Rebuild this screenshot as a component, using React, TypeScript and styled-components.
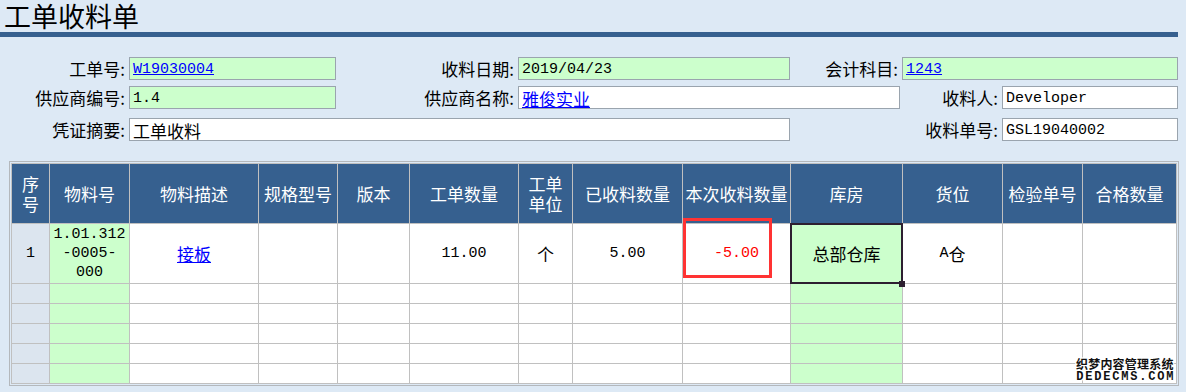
import React from "react";
import styled, { createGlobalStyle } from "styled-components";

const CJK = `"Noto Sans CJK SC", "Noto Sans", sans-serif`;
const MONO = `"Liberation Mono", "Noto Sans CJK SC", monospace`;

const GlobalStyle = createGlobalStyle`
  html, body { margin: 0; padding: 0; background: #dde9f5; }
  body { font-family: ${CJK}; color: #000; }
`;

const Page = styled.div`
  position: relative;
  width: 1186px;
  height: 392px;
  overflow: hidden;
  background: #dde9f5;
`;

const TitleText = styled.h1`
  margin: 0;
  height: 32px;
  padding-left: 4px;
  font: 400 27px/32px ${CJK};
  color: #000;
`;

const TitleBar = styled.div`
  width: 1178px;
  height: 5px;
  background: #36608f;
`;

const Form = styled.div`
  margin-top: 20px;
  display: flex;
  flex-direction: column;
`;

const FormRow = styled.div<{ $cols: string; $mt?: number }>`
  display: grid;
  grid-template-columns: ${(p) => p.$cols};
  height: 23px;
  margin-top: ${(p) => p.$mt ?? 0}px;
  width: 1178px;
`;

const Label = styled.div`
  display: flex;
  align-items: center;
  justify-content: flex-end;
  padding-right: 4px;
  font: 400 17px/23px ${CJK};
  white-space: nowrap;
`;

const Field = styled.div<{ $green?: boolean }>`
  box-sizing: border-box;
  height: 23px;
  border: 1px solid #9aa4ae;
  background: ${(p) => (p.$green ? "#ccffcc" : "#ffffff")};
  padding: 1px 3px 0;
  display: flex;
  align-items: center;
  white-space: nowrap;
  overflow: hidden;
`;

const Mono = styled.span`
  font: 400 15px/21px ${MONO};
`;

const Han = styled.span`
  font: 400 17px/21px ${CJK};
`;

const Link = styled.a`
  color: #0000ff;
  text-decoration: underline;
  cursor: pointer;
`;

const TableWrap = styled.div`
  position: relative;
  margin: 20px 0 0 9px;
  width: fit-content;
  border: 1px solid #b4b8bc;
  padding: 1px;
`;

const Grid = styled.div`
  display: grid;
  grid-template-columns: 37px 79px 128px 78px 71px 108px 53px 109px 107px 111px 99px 79px 93px;
  grid-template-rows: 59px 59px repeat(5, 19px);
  gap: 1px;
  padding: 1px;
  background: #c0c0c0;
`;

const HeadCell = styled.div`
  background: #36608f;
  color: #ffffff;
  display: flex;
  align-items: center;
  justify-content: center;
  text-align: center;
  padding: 0 2px;
  font: 400 17px/20px ${CJK};
`;

type Tone = "idx" | "green" | "white";
const toneBg: Record<Tone, string> = {
  idx: "#dce5ef",
  green: "#ccffcc",
  white: "#ffffff",
};

const Cell = styled.div<{ $tone?: Tone; $red?: boolean }>`
  position: relative;
  background: ${(p) => toneBg[p.$tone ?? "white"]};
  color: ${(p) => (p.$red ? "#ff0000" : "#000")};
  display: flex;
  align-items: center;
  justify-content: center;
  text-align: center;
  font: 400 15px/19px ${MONO};
`;

const CellHan = styled.span`
  font: 400 17px/20px ${CJK};
`;

const SelectedCell = styled(Cell)`
  &::before {
    content: "";
    position: absolute;
    inset: -1px;
    border: 2px solid #2d1f30;
    z-index: 2;
  }
  &::after {
    content: "";
    position: absolute;
    right: -3px;
    bottom: -4px;
    width: 6px;
    height: 6px;
    background: #2d1f30;
    z-index: 3;
  }
`;

const Highlight = styled.div`
  position: absolute;
  left: 673px;
  top: 56px;
  width: 89px;
  height: 60px;
  box-sizing: border-box;
  border: 3px solid #ff3333;
  pointer-events: none;
  z-index: 4;
`;

const Watermark = styled.div`
  position: absolute;
  left: 1076px;
  top: 356px;
  display: flex;
  flex-direction: column;
  align-items: center;
  color: #111;
  text-shadow: 1px 0 0 #fff, -1px 0 0 #fff, 0 1px 0 #fff, 0 -1px 0 #fff,
    1px 1px 0 #fff, -1px -1px 0 #fff, 1px -1px 0 #fff, -1px 1px 0 #fff;
  z-index: 5;
`;

const WmTop = styled.div`
  font: 700 12px/15px ${CJK};
  letter-spacing: 0.2px;
`;

const WmBottom = styled.div`
  font: 700 12px/13px ${MONO};
  letter-spacing: 1.8px;
  margin-right: -2px;
`;

const headers = [
  "序号",
  "物料号",
  "物料描述",
  "规格型号",
  "版本",
  "工单数量",
  "工单单位",
  "已收料数量",
  "本次收料数量",
  "库房",
  "货位",
  "检验单号",
  "合格数量",
];

const greenCols = new Set([1, 9]);

export default function App() {
  return (
    <Page>
      <GlobalStyle />
      <TitleText>工单收料单</TitleText>
      <TitleBar />

      <Form>
        <FormRow $cols="129px 207px 182px 272px 112px 276px">
          <Label>工单号:</Label>
          <Field $green>
            <Mono>
              <Link>W19030004</Link>
            </Mono>
          </Field>
          <Label>收料日期:</Label>
          <Field $green>
            <Mono>2019/04/23</Mono>
          </Field>
          <Label>会计科目:</Label>
          <Field $green>
            <Mono>
              <Link>1243</Link>
            </Mono>
          </Field>
        </FormRow>
        <FormRow $cols="129px 207px 182px 382px 102px 176px" $mt={6}>
          <Label>供应商编号:</Label>
          <Field $green>
            <Mono>1.4</Mono>
          </Field>
          <Label>供应商名称:</Label>
          <Field>
            <Han>
              <Link>雅俊实业</Link>
            </Han>
          </Field>
          <Label>收料人:</Label>
          <Field>
            <Mono>Developer</Mono>
          </Field>
        </FormRow>
        <FormRow $cols="129px 661px 212px 176px" $mt={9}>
          <Label>凭证摘要:</Label>
          <Field>
            <Han>工单收料</Han>
          </Field>
          <Label>收料单号:</Label>
          <Field>
            <Mono>GSL19040002</Mono>
          </Field>
        </FormRow>
      </Form>

      <TableWrap>
        <Grid>
          {headers.map((h) => (
            <HeadCell key={h}>{h}</HeadCell>
          ))}

          <Cell $tone="idx">1</Cell>
          <Cell $tone="green">
            1.01.312
            <br />
            -0005-
            <br />
            000
          </Cell>
          <Cell>
            <CellHan>
              <Link>接板</Link>
            </CellHan>
          </Cell>
          <Cell />
          <Cell />
          <Cell>11.00</Cell>
          <Cell>
            <CellHan>个</CellHan>
          </Cell>
          <Cell>5.00</Cell>
          <Cell $red>-5.00</Cell>
          <SelectedCell $tone="green">
            <CellHan>总部仓库</CellHan>
          </SelectedCell>
          <Cell>
            A<CellHan>仓</CellHan>
          </Cell>
          <Cell />
          <Cell />

          {Array.from({ length: 5 }).map((_, r) =>
            headers.map((_h, c) => (
              <Cell
                key={`${r}-${c}`}
                $tone={c === 0 ? "idx" : greenCols.has(c) ? "green" : "white"}
              />
            ))
          )}
        </Grid>
        <Highlight />
      </TableWrap>

      <Watermark>
        <WmTop>织梦内容管理系统</WmTop>
        <WmBottom>DEDECMS.COM</WmBottom>
      </Watermark>
    </Page>
  );
}
